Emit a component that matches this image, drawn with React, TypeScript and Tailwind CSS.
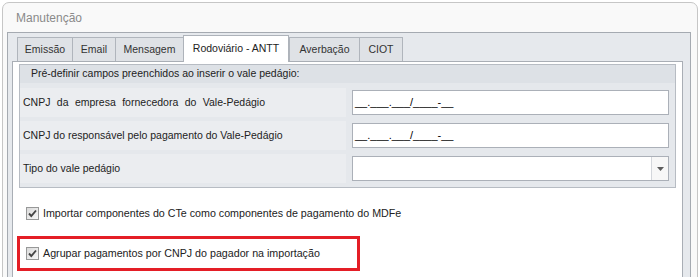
import React from 'react';

const tabs = [
  { label: 'Emissão', w: 'w-[55px]' },
  { label: 'Email', w: 'w-[43px]' },
  { label: 'Mensagem', w: 'w-[68px]' },
  { label: 'Rodoviário - ANTT', w: 'w-[106px]', active: true },
  { label: 'Averbação', w: 'w-[70px]' },
  { label: 'CIOT', w: 'w-[44px]', last: true },
];

const CheckBox: React.FC = () => (
  <div className="w-[13px] h-[13px] border border-[#979898] bg-gradient-to-br from-[#dadada] to-[#f8f8f8] flex items-center justify-center shrink-0">
    <svg width="11" height="11" viewBox="0 0 11 11">
      <path d="M2 5.5 L4.3 8 L9 2.5" fill="none" stroke="#454545" strokeWidth="1.9" />
    </svg>
  </div>
);

const MaskInput: React.FC = () => (
  <div className="w-[317px] h-[25px] border border-[#abb0b8] bg-white flex items-center pl-[2px] text-[11px] text-black">
    __.___.___/____-__
  </div>
);

const ComboInput: React.FC = () => (
  <div className="w-[317px] h-[25px] border border-[#abb0b8] bg-white flex justify-end">
    <div className="w-[17px] h-full border-l border-[#d3d6db] bg-[#f7f7f7] flex items-center justify-center">
      <svg width="7" height="4" viewBox="0 0 7 4">
        <path d="M0 0 H7 L3.5 4 Z" fill="#5c5c5c" />
      </svg>
    </div>
  </div>
);

const rows = [
  { label: 'CNPJ da empresa fornecedora do Vale-Pedágio', input: <MaskInput />, spaced: true },
  { label: 'CNPJ do responsável pelo pagamento do Vale-Pedágio', input: <MaskInput /> },
  { label: 'Tipo do vale pedágio', input: <ComboInput /> },
];

export default function App() {
  return (
    <div className="w-[700px] h-[277px] bg-white overflow-hidden font-['Liberation_Sans',Arial,sans-serif] text-[#333]">
      <div className="mt-[2px] ml-[2px] w-[696px] h-[300px] border border-[#c6c6c6] rounded-t-[7px] bg-[#f9f9f9]">
        <div className="h-[29px] pl-[13px] flex items-center text-[12px] text-[#8a8a8a]">Manutenção</div>

        <div className="ml-[4px] mr-[6px] h-[260px] border border-[#a5aab1] bg-[#e6e9ed] flex flex-col">
          {/* tabs */}
          <div className="h-[28px] pl-[9px] flex items-end shrink-0">
            {tabs.map((t) =>
              t.active ? (
                <div
                  key={t.label}
                  className={`${t.w} h-[27px] -mb-[1px] relative z-10 bg-white border border-b-0 border-[#aeb3ba] flex items-center justify-center pb-[1px] text-[10.5px] text-[#222]`}
                >
                  {t.label}
                </div>
              ) : (
                <div
                  key={t.label}
                  className={`${t.w} h-[24px] bg-[#dfe2e6] border-t border-l ${t.last ? 'border-r' : ''} border-[#b0b5bc] flex items-center justify-center text-[10.5px] text-[#333]`}
                >
                  {t.label}
                </div>
              )
            )}
          </div>

          {/* page */}
          <div className="ml-[4px] mr-[7px] flex-1 border border-[#a9aeb5] bg-white">
            <div className="mt-[2px] mx-[6px] border border-[#b7bcc3] bg-[#e5e8ec]">
              <div className="h-[18px] pl-[11px] flex items-center bg-[#dde1e6] text-[10.5px] text-[#222]">
                Pré-definir campos preenchidos ao inserir o vale pedágio:
              </div>
              <div className="pt-[3px] pb-[2px]">
                {rows.map((r) => (
                  <div key={r.label} className="h-[33px] flex items-center gap-[6px] pr-[6px]">
                    <div
                      className={`w-[326px] h-[29px] bg-[#ebedf0] pl-[3px] flex items-center text-[10.5px] text-[#222] ${r.spaced ? '[word-spacing:3.5px]' : ''}`}
                    >
                      {r.label}
                    </div>
                    {r.input}
                  </div>
                ))}
              </div>
            </div>

            <div className="mt-[16px] h-[18px] pl-[13px] flex items-center gap-[4px] text-[10.7px] text-[#222]">
              <CheckBox />
              <span>Importar componentes do CTe como componentes de pagamento do MDFe</span>
            </div>

            <div className="mt-[14px] ml-[4px] w-[343px] h-[35px] border-[3px] border-[#e41e26] pl-[6px] flex items-center gap-[4px] text-[10.7px] text-[#222]">
              <CheckBox />
              <span>Agrupar pagamentos por CNPJ do pagador na importação</span>
            </div>
          </div>
        </div>
      </div>
    </div>
  );
}
